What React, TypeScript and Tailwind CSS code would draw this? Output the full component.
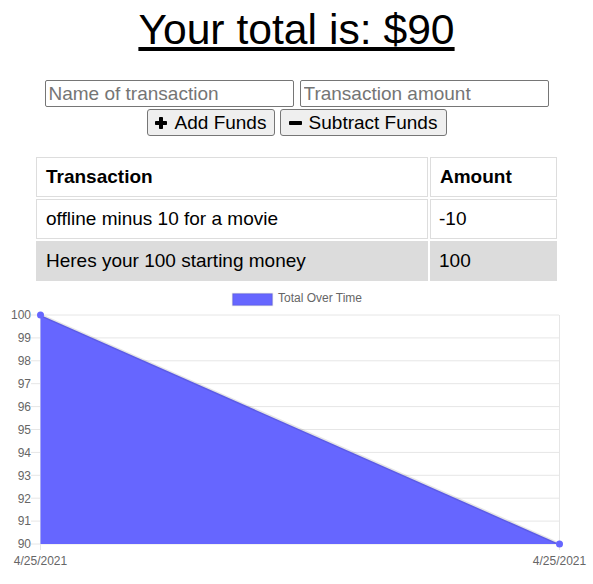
import React from "react";

const FONT = { fontFamily: '"Liberation Sans", Arial, sans-serif' };

function PlusIcon() {
  return (
    <svg width="12" height="12" viewBox="0 0 12 12" className="block">
      <rect x="4" y="0" width="4" height="12" rx="0.8" fill="#000" />
      <rect x="0" y="4" width="12" height="4" rx="0.8" fill="#000" />
    </svg>
  );
}

function MinusIcon() {
  return (
    <svg width="13" height="12" viewBox="0 0 13 12" className="block">
      <rect x="0" y="4" width="13" height="4" rx="0.8" fill="#000" />
    </svg>
  );
}

function Chart() {
  const ys = [100, 99, 98, 97, 96, 95, 94, 93, 92, 91, 90];
  const gy = (v: number) => 32 + (100 - v) * 22.9;
  const grid = "#e6e6e6";
  return (
    <svg width="593" height="301" viewBox="0 0 593 301" className="block" style={FONT}>
      <rect x="232.5" y="10.5" width="40" height="12" fill="#6666ff" stroke="rgba(0,0,0,0.1)" strokeWidth="1.5" />
      <text x="278" y="19" fontSize="12" fill="#666">Total Over Time</text>
      {ys.map((v) => (
        <line key={v} x1="31" x2="559" y1={gy(v)} y2={gy(v)} stroke={grid} strokeWidth="1" />
      ))}
      <line x1="40.5" x2="40.5" y1="32" y2="267" stroke={grid} strokeWidth="1" />
      <line x1="559.5" x2="559.5" y1="32" y2="267" stroke={grid} strokeWidth="1" />
      {ys.map((v) => (
        <text key={v} x="31" y={gy(v) + 4.3} fontSize="12" fill="#666" textAnchor="end">
          {v}
        </text>
      ))}
      <text x="40.5" y="282" fontSize="12" fill="#666" textAnchor="middle">4/25/2021</text>
      <text x="559.5" y="282" fontSize="12" fill="#666" textAnchor="middle">4/25/2021</text>
      <polygon points="40.5,32 559.5,261 40.5,261" fill="#6666ff" />
      <line x1="40.5" y1="32" x2="559.5" y2="261" stroke="rgba(0,0,0,0.1)" strokeWidth="3" />
      <circle cx="40.5" cy="32" r="3.5" fill="#6666ff" />
      <circle cx="559.5" cy="261" r="3.5" fill="#6666ff" />
    </svg>
  );
}

export default function App() {
  return (
    <div className="w-[593px] min-h-[584px] bg-white text-black" style={FONT}>
      <h1 className="mt-[5px] text-center text-[42.67px] leading-[48px] font-normal underline">
        Your total is: $90
      </h1>
      <div className="mt-[27px] flex justify-center gap-[6px]">
        <input
          placeholder="Name of transaction"
          className="w-[249px] h-[27px] border border-[#767676] rounded-[2px] px-[3px] text-[19px] leading-[22px] placeholder:text-[#757575] bg-white"
        />
        <input
          placeholder="Transaction amount"
          className="w-[249px] h-[27px] border border-[#767676] rounded-[2px] px-[3px] text-[19px] leading-[22px] placeholder:text-[#757575] bg-white"
        />
      </div>
      <div className="mt-[2px] flex justify-center gap-[5px]">
        <button className="w-[128px] h-[27px] flex items-center justify-center gap-[8px] bg-[#efefef] border border-[#767676] rounded-[3px] text-[19px] leading-[22px]">
          <PlusIcon />
          <span>Add Funds</span>
        </button>
        <button className="w-[167px] h-[27px] flex items-center justify-center gap-[7px] bg-[#efefef] border border-[#767676] rounded-[3px] text-[19px] leading-[22px]">
          <MinusIcon />
          <span>Subtract Funds</span>
        </button>
      </div>
      <table className="mt-[19px] mx-auto border-separate border-spacing-[2px] text-[19px] leading-[22px] text-left">
        <thead>
          <tr>
            <th className="w-[392px] h-[40px] px-[9px] py-0 border border-[#dddddd] font-bold">Transaction</th>
            <th className="w-[127px] h-[40px] px-[9px] py-0 border border-[#dddddd] font-bold">Amount</th>
          </tr>
        </thead>
        <tbody>
          <tr>
            <td className="h-[40px] px-[9px] py-0 border border-[#dddddd]">offline minus 10 for a movie</td>
            <td className="h-[40px] px-[8px] py-0 border border-[#dddddd]">-10</td>
          </tr>
          <tr className="bg-[#dcdcdc]">
            <td className="h-[40px] px-[9px] py-0 border border-[#dcdcdc] bg-[#dcdcdc]">Heres your 100 starting money</td>
            <td className="h-[40px] px-[8px] py-0 border border-[#dcdcdc] bg-[#dcdcdc]">100</td>
          </tr>
        </tbody>
      </table>
      <Chart />
    </div>
  );
}
